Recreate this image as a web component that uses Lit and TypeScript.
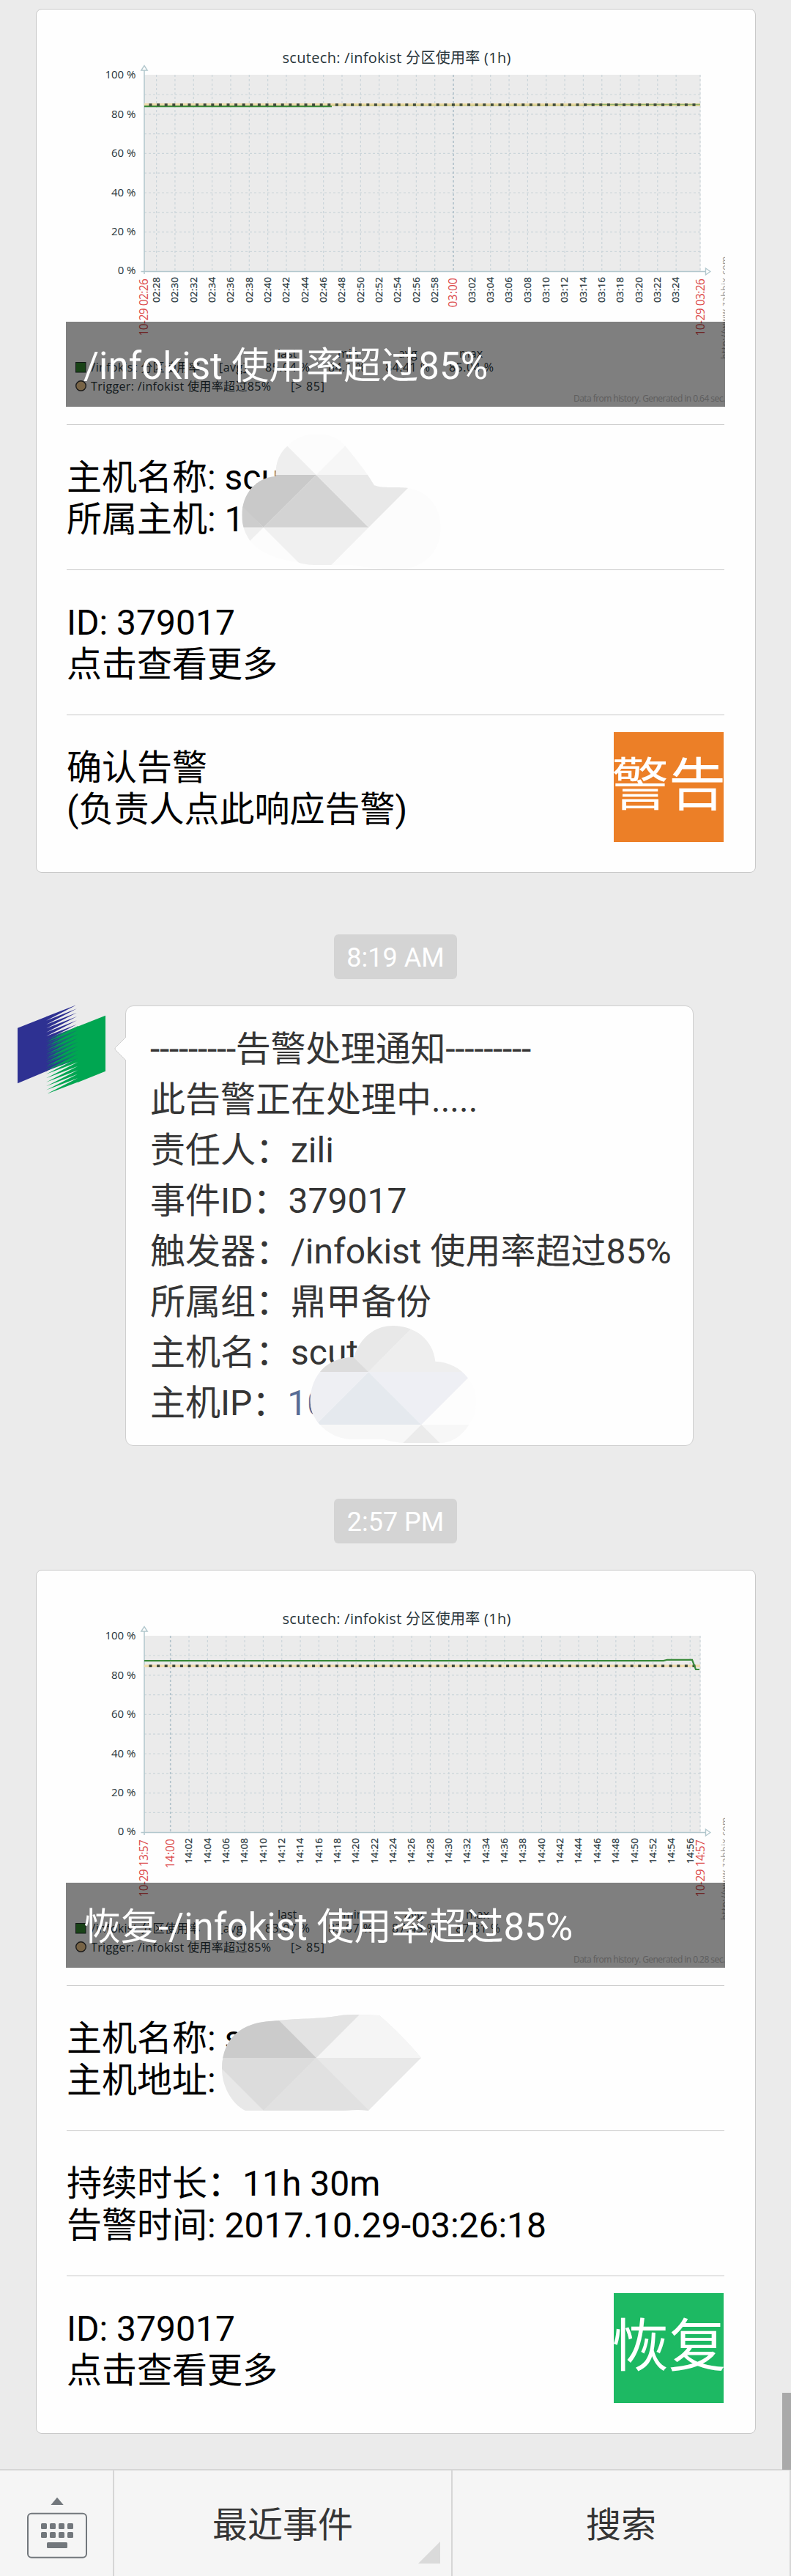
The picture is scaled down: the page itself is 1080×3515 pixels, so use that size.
import { LitElement, html, svg, css } from "lit";
import { customElement, property } from "lit/decorators.js";

const FONT = css`Roboto, "Noto Sans CJK SC", sans-serif`;

interface Tick { label: string; major?: boolean }
interface Stat { head: string; headX: number; value: string; x: number }
interface ChartData {
  firstTickX: number;
  ticks: Tick[];
  start: string;
  end: string;
  stats: Stat[];
  footer: string;
  kind: "alert" | "recovery";
}

const pad = (n: number) => String(n).padStart(2, "0");

function makeTicks(startMinutes: number, count: number): Tick[] {
  return Array.from({ length: count }, (_, i) => {
    const m = startMinutes + i * 2;
    return { label: `${pad(Math.floor(m / 60))}:${pad(m % 60)}`, major: m % 60 === 0 };
  });
}

const ALERT: ChartData = {
  firstTickX: 213.6,
  ticks: makeTicks(148, 29),
  start: "10-29 02:26",
  end: "10-29 03:26",
  stats: [
    { head: "last", headX: 379, value: "85.04 %", x: 362 },
    { head: "min", headX: 461, value: "84.1 %", x: 448 },
    { head: "avg", headX: 544, value: "84.41 %", x: 526 },
    { head: "max", headX: 627, value: "85.04 %", x: 613 },
  ],
  footer: "Data from history. Generated in 0.64 sec.",
  kind: "alert",
};

const RECOVERY: ChartData = {
  firstTickX: 232.7,
  ticks: makeTicks(840, 29),
  start: "10-29 13:57",
  end: "10-29 14:57",
  stats: [
    { head: "last", headX: 379, value: "83.07 %", x: 362 },
    { head: "min", headX: 468, value: "83.07 %", x: 448 },
    { head: "avg", headX: 552, value: "87.45 %", x: 535 },
    { head: "max", headX: 636, value: "87.81 %", x: 622 },
  ],
  footer: "Data from history. Generated in 0.28 sec.",
  kind: "recovery",
};

@customElement("usage-chart")
export class UsageChart extends LitElement {
  @property({ attribute: false }) data: ChartData = ALERT;

  static styles = css`
    :host { display: block; width: 900px; height: 503px; }
    svg { display: block; overflow: hidden; }
    text { font-family: "Open Sans", "Noto Sans CJK SC", sans-serif; fill: #26343b; }
    .title { font-size: 20px; }
    .pct { font-size: 15px; text-anchor: end; }
    .tick { font-size: 13.500px; stroke: #26343b; stroke-width: 0.250px; }
    .major { font-size: 15.500px; fill: #dc4b4b; }
    .legend { font-size: 16px; }
    .foot { font-size: 12px; fill: #bdbdbd; }
    .mark { font-size: 12px; fill: #9a9a9a; }
    .grid { stroke: #cbd5da; stroke-width: 1.2; stroke-dasharray: 3 3; fill: none; }
    .hour { stroke: #b0c1ca; stroke-width: 1.6; }
    .axis { stroke: #b2c7cd; stroke-width: 1.5; fill: none; }
    .arrow { stroke: #b2c7cd; stroke-width: 1.4; fill: #fff; }
    .dots { stroke: #3f4a3c; stroke-width: 3.6; stroke-dasharray: 4 6.6; }
    .limit { stroke: #f0dcae; stroke-width: 3.4; }
    .usage { stroke: #3b8a3b; stroke-width: 2.2; fill: none; }
    .soft { stroke: #d5d08f; stroke-width: 2.4; }
  `;

  private vertical(x: number, bottom: number, length: number, cls: string, label: string) {
    return svg`<text class=${cls} transform=${`translate(${x} ${bottom}) rotate(-90)`} textLength=${length}>${label}</text>`;
  }

  render() {
    const d = this.data;
    const step = 25.34;
    return html`<svg width="900" height="503" viewBox="90 52 900 503">
      <text class="title" x="385.5" y="86" textLength="312">scutech: /infokist 分区使用率 (1h)</text>
      <rect x="197" y="102" width="759.5" height="268" fill="#ebebeb"></rect>
      ${Array.from({ length: 9 }, (_, i) => svg`<line class="grid" x1="197" x2="956" y1=${129 + i * 26.8} y2=${129 + i * 26.8}></line>`)}
      ${d.ticks.map((t, i) => svg`<line class=${t.major ? "grid hour" : "grid"} y1="102" y2="370" x1=${d.firstTickX + i * step} x2=${d.firstTickX + i * step}></line>`)}
      <line class="grid" x1="956" x2="956" y1="102" y2="370"></line>
      <path class="axis" d="M197 96V374M192.500 370.500H963"></path>
      <path class="arrow" d="M192.800 96H201.200L197 89.500ZM963.500 366V375L969.800 370.500Z"></path>
      ${[100, 80, 60, 40, 20, 0].map((p, i) => svg`<text class="pct" x="185.500" y=${107.300 + i * 53.400}>${p} %</text>`)}
      ${d.kind === "alert"
        ? svg`<line class="limit" x1="197" x2="956" y1="142.700" y2="142.700"></line>
            <line class="soft" x1="453" x2="956" y1="143.800" y2="143.800"></line>
            <line class="usage" x1="197" x2="453" y1="145.200" y2="145.200"></line>
            <line x1="797" x2="956" y1="142.300" y2="142.300" stroke="#3b8a3b" stroke-width="1.200" stroke-opacity="0.500"></line>
            <line class="dots" x1="203.500" x2="956" y1="143" y2="143"></line>`
        : svg`<line class="limit" x1="197" x2="956" y1="143.300" y2="143.300"></line>
            <line class="dots" x1="203.500" x2="956" y1="143.300" y2="143.300"></line>
            <path class="usage" d="M197 136.100H906L911 134.800H945L950 148H955"></path>`}
      ${d.ticks.map((t, i) => t.major
        ? this.vertical(d.firstTickX + i * step + 4.800, 419.500, 40.500, "major", t.label)
        : this.vertical(d.firstTickX + i * step + 4.300, 413, 35, "tick", t.label))}
      ${this.vertical(202, 458.500, 78.500, "major", d.start)}
      ${this.vertical(961.500, 458.500, 78.500, "major", d.end)}
      ${this.vertical(994, 490, 140, "mark", "http://www.zabbix.com")}
      ${d.stats.map((s) => svg`
        <text class="legend" x=${s.headX} y="488.300">${s.head}</text>
        <text class="legend" x=${s.x} y="507" textLength=${s.value.length === 7 ? 61 : 51}>${s.value}</text>`)}
      <rect x="103.500" y="494.500" width="13.500" height="13.500" fill="#33862f" stroke="#20302a"></rect>
      <text class="legend" x="124.500" y="507" textLength="149">/infokist 分区使用率</text>
      <text class="legend" x="299" y="507" textLength="38">[avg]</text>
      <circle cx="110.500" cy="526.500" r="6.800" fill="#f0c88c" stroke="#333" stroke-width="1.400"></circle>
      <text class="legend" x="124" y="533" textLength="246">Trigger: /infokist 使用率超过85%</text>
      <text class="legend" x="397" y="533" textLength="46">[&gt; 85]</text>
      <text class="foot" x="783" y="547.700" textLength="207">${d.footer}</text>
    </svg>`;
  }
}

@customElement("alert-card")
export class AlertCard extends LitElement {
  @property({ attribute: false }) chart: ChartData = ALERT;
  @property() heading = "";
  @property() badge = "";
  @property() tone = "warn";
  @property({ attribute: false }) rows: string[][] = [];

  static styles = css`
    :host { display: block; position: relative; box-sizing: border-box; width: 983px; height: 1179px;
      margin-left: 49px; padding: 39px 41px 0 40px; background: #fefefe; border: 1px solid #c9c9c9;
      border-radius: 8px; font-family: ${FONT}; font-kerning: none; }
    .cover { position: relative; height: 503px; margin-bottom: 24px; }
    .caption { position: absolute; left: 0; right: 0; bottom: 0; height: 116px; box-sizing: border-box;
      padding-left: 24px; background: rgba(0, 0, 0, 0.5); color: #fff; font-size: 51px; line-height: 121px;
      white-space: nowrap; }
    .row { display: flex; justify-content: space-between; align-items: flex-start; box-sizing: border-box;
      height: 198px; margin: 0 1px; padding-top: 44px; border-top: 1px solid #c8c8c8;
      color: #000; font-size: 48px; line-height: 56.500px; white-space: pre; }
    .badge { width: 150px; height: 150px; margin: -21px 1px 0 0; overflow: hidden; display: flex;
      justify-content: center; color: #fff; font-size: 78px; line-height: 147px; }
    .warn { background: #ec7f27; }
    .ok { background: #1db963; }
  `;

  render() {
    return html`
      <div class="cover">
        <usage-chart .data=${this.chart}></usage-chart>
        <div class="caption">${this.heading}</div>
      </div>
      ${this.rows.map((r, i) => html`<div class="row">
        <div>${r.map((line) => html`<div>${line}</div>`)}</div>
        ${i === this.rows.length - 1 ? html`<div class="badge ${this.tone}">${this.badge}</div>` : null}
      </div>`)}
      <slot></slot>`;
  }
}

@customElement("app-root")
export class AppRoot extends LitElement {
  static styles = css`
    :host { display: flex; flex-direction: column; position: relative; box-sizing: border-box;
      width: 1080px; height: 3515px; padding-top: 12px; background: #ebebeb; overflow: hidden;
      font-family: ${FONT}; }
    .time { align-self: center; width: 168px; height: 61px; border-radius: 6px; background: #d4d4d4;
      color: #fff; font-size: 36px; line-height: 64px; text-align: center; flex: none; }
    .first { margin: 84px 0 36px; }
    .second { margin: 72px 0 36px; }
    .message { display: flex; align-items: flex-start; padding-left: 24px; flex: none; }
    .logo { width: 120px; height: 120px; flex: none; }
    .bubble { position: relative; box-sizing: border-box; width: 776px; height: 601px; margin-left: 27px;
      padding: 24px 0 0 33px; background: #fefefe; border: 1px solid #cfcfcf; border-radius: 11px;
      color: #353535; font-size: 48px; line-height: 69px; white-space: pre; }
    .rule { letter-spacing: -0.280px; }
    .tail { position: absolute; left: -16px; top: 41px; }
    .link { color: #576b95; }
    .mask { position: absolute; display: block; }
    .mask-a { left: 250px; top: 567px; }
    .mask-b { left: 218px; top: 417px; }
    .mask-c { left: 250px; top: 597px; }
    .scroll { position: absolute; right: 0; top: 3265px; width: 12px; height: 105px; background: #a9a9a9; }
    .bar { display: flex; box-sizing: border-box; height: 146px; margin-top: auto; flex: none;
      border-top: 2px solid #d6d6d6; background: #f5f5f5; color: #353535; font-size: 48px; line-height: 149px; }
    .keys { width: 154px; border-right: 2px solid #d6d6d6; }
    .tab { position: relative; width: 460px; border-right: 2px solid #d6d6d6; text-align: center; }
    .corner { position: absolute; right: 15px; bottom: 17px; }
  `;

  private logo() {
    const blue = Array.from({ length: 14 }, (_, i) => {
      const y = 112 + i * 16;
      return `M117 ${y - 66}L243 ${y - 115}L117 ${y - 50}Z`;
    }).join("");
    const green = Array.from({ length: 14 }, (_, i) => {
      const y = 150 + i * 16.4;
      return `M247 ${y - 66}V${y - 49.6}L117 ${y}Z`;
    }).join("");
    return html`<svg class="logo" viewBox="0 0 360 360">
      <path d="M118 136L246 86V220L118 268Z" fill="#1c6a76"></path>
      <path d="M0 92L118 46V269L0 319Z" fill="#2e3192"></path>
      <path d=${blue} fill="#2e3192"></path>
      <path d="M246 86L360 41V269L246 315Z" fill="#00a651"></path>
      <path d=${green} fill="#00a651"></path>
    </svg>`;
  }

  render() {
    return html`
      <alert-card .chart=${ALERT} heading="/infokist 使用率超过85%" badge="警告" tone="warn"
        .rows=${[["主机名称: scu", "所属主机: 1"], ["ID: 379017", "点击查看更多"], ["确认告警", "(负责人点此响应告警)"]]}>
        <svg class="mask mask-a" width="320" height="210" viewBox="0 0 960 630">
          <clipPath id="ca"><path d="M229 210C228 150 245 115 277 86C310 52 350 37 400 37C450 37 490 55 514 85C550 130 600 190 633 247C660 256 680 255 715 255C745 255 760 256 772 258C850 270 905 330 905 420C905 510 850 570 772 586C700 590 640 590 560 575C530 572 490 573 459 573H385Q340 570 318 561C230 550 160 520 124 474C105 445 91 415 91 370C91 280 150 215 229 210Z"></path></clipPath>
          <g clip-path="url(#ca)">
            <rect width="960" height="630" fill="#fcfcfc"></rect>
            <path d="M277 86L395 204H200V86Z" fill="#eee"></path>
            <path d="M514 85L395 204H640Z" fill="#f6f6f6"></path>
            <path d="M80 204H395L179 419L80 325Z" fill="#c9c9c9"></path>
            <path d="M80 320L179 419H80Z" fill="#cdcdcd"></path>
            <path d="M395 204L610 419H179Z" fill="#d3d3d3"></path>
            <path d="M395 204H825L610 419Z" fill="#e8e8e8"></path>
            <path d="M80 419H179L80 518Z" fill="#efefef"></path>
            <path d="M179 419H610L440 590H350Z" fill="#f0f0f0"></path>
          </g>
        </svg>
      </alert-card>

      <div class="time first">8:19 AM</div>

      <div class="message">
        ${this.logo()}
        <div class="bubble"><svg class="tail" width="18" height="34" viewBox="0 0 18 34"><path d="M16 1L1.500 15.500Q0.500 17 1.500 18.500L16 33" fill="#fefefe" stroke="#cfcfcf"></path><path d="M15.500 2H18V32H15.500Z" fill="#fefefe"></path></svg><div class="rule">---------告警处理通知---------</div><div>此告警正在处理中.....</div><div>责任人：zili</div><div>事件ID：379017</div><div>触发器：/infokist 使用率超过85%</div><div>所属组：鼎甲备份</div><div>主机名：scut</div><div>主机IP：<span class="link">10</span></div>
          <svg class="mask mask-b" width="280" height="183" viewBox="0 0 840 549">
            <clipPath id="cb"><path d="M279 186C305 105 365 57 440 57C530 57 605 115 613 203C665 205 715 228 746 270C770 300 780 330 780 366C780 400 775 430 751 462C720 510 680 538 625 538H483Q440 534 400 522H262C210 518 170 495 138 460C112 430 100 395 101 358C105 260 170 185 279 186Z"></path></clipPath>
            <g clip-path="url(#cb)">
              <rect width="840" height="549" fill="#fdfdfd"></rect>
              <path d="M279 186L260 40H545L340 246Z" fill="#e8e8e8"></path>
              <path d="M545 40H840V246H340Z" fill="#eee"></path>
              <path d="M90 246V170H263L340 246Z" fill="#dcdcdc"></path>
              <path d="M90 246H340L124 462H90Z" fill="#eeeff3"></path>
              <path d="M340 246L556 462H124Z" fill="#e5e9ee"></path>
              <path d="M340 246H772L556 462Z" fill="#eeeff4"></path>
              <path d="M90 462H840V549H90Z" fill="#f7f7f7"></path>
              <path d="M556 462L643 549H469Z" fill="#ebebeb"></path>
            </g>
          </svg></div>
      </div>

      <div class="time second">2:57 PM</div>

      <alert-card .chart=${RECOVERY} heading="恢复-/infokist 使用率超过85%" badge="恢复" tone="ok"
        .rows=${[["主机名称: s", "主机地址:"], ["持续时长：11h 30m", "告警时间: 2017.10.29-03:26:18"], ["ID: 379017", "点击查看更多"]]}>
        <svg class="mask mask-c" width="280" height="150" viewBox="300 2740 280 150">
          <clipPath id="cc"><path d="M303 2823C303 2790 320 2771 343 2763C357 2758 369 2758 381 2757C410 2754 435 2755 460 2751C470 2749 480 2749 491 2749L518 2750Q550 2778 575 2808L503 2880Q490 2878 470 2880H335C315 2870 303 2845 303 2823Z"></path></clipPath>
          <g clip-path="url(#cc)">
            <rect x="300" y="2740" width="280" height="150" fill="#e8e8e8"></rect>
            <path d="M300 2740H368L432 2808H300Z" fill="#cbcbcb"></path>
            <path d="M364 2740L432 2808L500 2740Z" fill="#e3e3e3"></path>
            <path d="M500 2740L432 2808H580V2740Z" fill="#f5f5f5"></path>
            <path d="M300 2808H432L360 2880L300 2820Z" fill="#dcdcdc"></path>
            <path d="M432 2808L510 2886H354Z" fill="#e1e1e1"></path>
          </g>
        </svg>
      </alert-card>

      <div class="scroll"></div>
      <div class="bar">
        <div class="keys"><svg width="154" height="144" viewBox="20 3 154 144" fill="#72777c">
          <path d="M69.500 50H86.700L78 39.800Z" transform="translate(20 0)"></path>
          <rect x="58" y="61.800" width="80" height="60" rx="5" fill="none" stroke="#72777c" stroke-width="2"></rect>
          ${[0, 1].map((r) => [0, 1, 2, 3].map((c) => svg`<rect x=${76 + c * 12} y=${75 + r * 12} width="8" height="8" rx="1.500"></rect>`))}
          <rect x="84" y="101" width="28" height="8" rx="1.500"></rect>
        </svg></div>
        <div class="tab">最近事件<svg class="corner" width="30" height="30"><path d="M30 0V30H0Z" fill="#dadada"></path></svg></div>
        <div class="tab">搜索</div>
      </div>`;
  }
}
